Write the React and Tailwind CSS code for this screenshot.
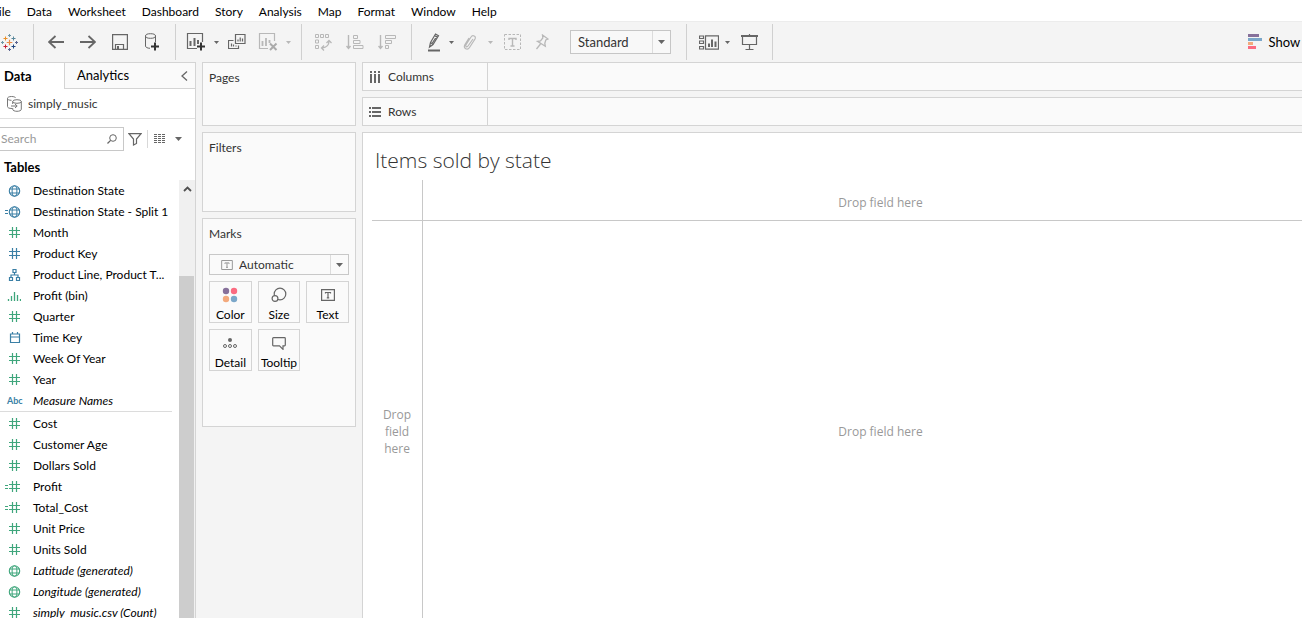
import React from "react";

const BLUE = "#3a7fa5";
const GREEN = "#3fa67c";

const Icon = ({ w = 16, h = 16, children, className = "" }) => (
  <svg width={w} height={h} viewBox={`0 0 ${w} ${h}`} fill="none" stroke="currentColor" className={`shrink-0 ${className}`} aria-hidden="true">
    {children}
  </svg>
);

const Caret = ({ className = "" }) => (
  <svg width="7" height="4" viewBox="0 0 7 4" className={`shrink-0 ${className}`} fill="currentColor" aria-hidden="true">
    <path d="M0 0h7L3.5 4z" />
  </svg>
);

const Logo = () => {
  const plus = (x, y, r, c, w = 1) => <path d={`M${x - r} ${y}h${2 * r}M${x} ${y - r}v${2 * r}`} stroke={c} strokeWidth={w} />;
  return (
    <Icon w={19} h={19}>
      {plus(9.5, 9.5, 2.8, "#eb8a44", 1.2)}
      {plus(5.5, 5.5, 2, "#eb9129", 1)}
      {plus(13.5, 5.5, 2, "#59879b", 1)}
      {plus(5.5, 13.5, 2, "#c72035", 1)}
      {plus(13.5, 13.5, 2, "#1f447e", 1)}
      {plus(9.5, 2.5, 1.5, "#7099a6")}
      {plus(9.5, 16.5, 1.5, "#5c6692")}
      {plus(2.5, 9.5, 1.5, "#7099a6")}
      {plus(16.5, 9.5, 1.5, "#5c6692")}
    </Icon>
  );
};

const Back = () => <Icon w={16} h={14}><path d="M16 7H1M7.5 1L1 7l6.500 6" strokeWidth="1.8" /></Icon>;
const Forward = () => <Icon w={16} h={14}><path d="M0 7h15M8.500 1L15 7l-6.500 6" strokeWidth="1.8" /></Icon>;
const Save = () => (
  <Icon w={16} h={16}>
    <path d="M.6.6h14.800v14.800H.6zM3.500 15v-4.500h8V15" strokeWidth="1.2" />
    <path d="M5 12h2v3H5z" fill="currentColor" stroke="none" />
  </Icon>
);
const NewSource = () => (
  <Icon w={16} h={18}>
    <ellipse cx="6.500" cy="3" rx="5" ry="2.300" />
    <path d="M1.500 3v10c0 1.300 1.800 2.200 4.500 2.300M11.500 3v6" />
    <path d="M7 13.500h8M11 9.500v8" stroke="#333" strokeWidth="2" />
  </Icon>
);
const NewSheet = () => (
  <Icon w={20} h={18}>
    <path d="M11 15.500H1.500v-15h15V9" strokeWidth="1.200" />
    <path d="M4.500 8v5M8.500 5v8M12 7v4" strokeWidth="2" />
    <path d="M11 13.500h8M15 9.500v8" stroke="#333" strokeWidth="2" />
  </Icon>
);
const Duplicate = () => (
  <Icon w={18} h={16}>
    <path d="M7.500.5h9.500v9h-9.500zM5.500 6.500h-5v8h10v-3M3.500 12.500v-3M5.500 12.500v-2M8 12.500v-1M10 7.500v-2M12.200 7.500v-4M14.500 7.500v-3" strokeWidth="1.200" />
  </Icon>
);
const ClearSheet = () => (
  <Icon w={20} h={18}>
    <path d="M10 15.500H1.500v-15h15V8" strokeWidth="1.200" />
    <path d="M4.500 8v5M8 5v8M11.500 7v3" strokeWidth="1.800" />
    <path d="M12 10.500l6.500 6.500M18.500 10.500L12 17" stroke="#aaa" strokeWidth="2" />
  </Icon>
);
const Swap = () => (
  <Icon w={18} h={18}>
    <path d="M1.500 1.500h3v3h-3zM6.500 1.500h3v3h-3zM11.500 1.500h3v3h-3zM1.500 7h3v3h-3zM1.500 12.500h3v3h-3z" />
    <path d="M15 8c0 4-2.500 6.500-7 7M12.500 10l2.500-2.500 2.500 2.500M10 12.500l-2.500 2.500L10 17.500" strokeWidth="1.300" />
  </Icon>
);
const SortAsc = () => (
  <Icon w={18} h={16}>
    <path d="M2.500 1v13M.5 12l2 2.500 2-2.500" strokeWidth="1.400" />
    <path d="M7.500 1.500h4v3h-4zM7.500 6.500h6.500v3H7.500zM7.500 11.500h9.500v3H7.500z" />
  </Icon>
);
const SortDesc = () => (
  <Icon w={18} h={16}>
    <path d="M2.500 1v13M.5 12l2 2.500 2-2.500" strokeWidth="1.400" />
    <path d="M7.500 1.500h10v3h-10zM7.500 6.500h6v3h-6zM7.500 11.500h3v3h-3z" />
  </Icon>
);
const Highlighter = () => (
  <Icon w={14} h={19}>
    <path d="M3.500 9.500L8.500 1l3 1.800-5.500 8.700-3.500 2.500zM3.500 9.500l2.800 2M7.500 2.500l3 2M5 10.500l5-7.500" strokeWidth="1.200" />
    <path d="M1 17.500h12" strokeWidth="2" />
  </Icon>
);
const Clip = () => (
  <Icon w={14} h={17}>
    <path d="M10 5l-5 7c-1 1.500-3 .5-2-1.200L8 3c1.500-2.500 5.500-1 4 2l-5.500 8.500c-2 3-6.500 1-4.800-2.500L6 4" strokeWidth="1.200" />
  </Icon>
);
const TextLabel = () => (
  <Icon w={17} h={16}>
    <path d="M.5.5h16v15H.5z" strokeDasharray="2.500 1.500" />
    <path d="M5 6V4.500h7V6M8.500 4.500V12M6.500 12h4" strokeWidth="1.400" />
  </Icon>
);
const Pin = () => (
  <Icon w={14} h={16}>
    <path d="M7.500 1l5.500 4-2.200 1-1 3.200.5 3L2.500 7.300l3-.5L7.800 4zM5.500 10L1.500 15" strokeWidth="1.300" />
  </Icon>
);
const Cards = () => (
  <Icon w={20} h={15}>
    <path d="M.5 1h4v2.500h-4zM.5 6h4v2.500h-4zM.5 11.500h4V14h-4zM6.500.8h13v13.400h-13z" strokeWidth="1.200" />
    <path d="M10 8.500V12M13 4.500V12M16.500 6.500V12" strokeWidth="2" />
  </Icon>
);
const Present = () => (
  <Icon w={17} h={17}>
    <path d="M0 2h17" strokeWidth="2" />
    <path d="M1.500 3v7.500h14V3M8.500 0v1M8.500 10.500v5M4.500 15.500h8" strokeWidth="1.200" />
  </Icon>
);
const ShowMeIcon = () => (
  <svg width="15" height="16" viewBox="0 0 15 16" className="shrink-0" aria-hidden="true">
    <path d="M0 0h11v3H0z" fill="#86709a" />
    <path d="M0 4h14v3H0z" fill="#7ba7c9" />
    <path d="M0 8h5v3H0z" fill="#f3a97c" />
    <path d="M0 12h8v3H0z" fill="#fb6b80" />
  </svg>
);

const Section = ({ children, className = "" }) => (
  <div className={`flex h-9 shrink-0 items-center border-r border-[#d0d0d0] ${className}`}>{children}</div>
);
const Tool = ({ label, children, className = "w-8", off }) => (
  <button type="button" aria-label={label} className={`flex h-7 shrink-0 items-center justify-center ${off ? "text-[#b8b8b8]" : "text-[#666]"} ${className}`}>
    {children}
  </button>
);

const Hash = ({ calc }) => (
  <Icon w={16} h={12}>
    {calc && <path d="M0 4.500h3M0 7.500h3" />}
    <path d="M4 3.500h11M4 7.500h11M7.500 0v11M11.500 0v11" strokeWidth="1.200" />
  </Icon>
);
const Globe = ({ calc }) => (
  <Icon w={16} h={12}>
    {calc && <path d="M0 4.500h3M0 7.500h3" />}
    <circle cx="9.500" cy="6" r="5.200" strokeWidth="1.100" />
    <ellipse cx="9.500" cy="6" rx="2.400" ry="5.200" />
    <path d="M4.500 4h10M4.500 8h10" />
  </Icon>
);
const Hierarchy = () => (
  <Icon w={16} h={12}>
    <path d="M8 .5h3v3H8zM4.500 8.500h3v3h-3zM11.500 8.500h3v3h-3zM9.500 3.500v2.500M6 8.500V6h7v2.500" strokeWidth="1.200" />
  </Icon>
);
const Bin = () => (
  <Icon w={16} h={12}>
    <path d="M3.500 9v2M6.500 6v5M9.500 2v9M12.500 5v6M15.500 9v2" strokeWidth="1.300" />
  </Icon>
);
const Calendar = () => (
  <Icon w={16} h={12}>
    <path d="M5.500 2h9v8.500h-9zM5.500 5h9M7.500 0v2.500M12.500 0v2.500" strokeWidth="1.200" />
  </Icon>
);
const Abc = () => <span className="pl-0.5 text-[9px] leading-3 font-bold">Abc</span>;

const dimensions = [
  ["Destination State", <Globe />, BLUE],
  ["Destination State - Split 1", <Globe calc />, BLUE],
  ["Month", <Hash />, GREEN],
  ["Product Key", <Hash />, BLUE],
  ["Product Line, Product T...", <Hierarchy />, BLUE],
  ["Profit (bin)", <Bin />, GREEN],
  ["Quarter", <Hash />, GREEN],
  ["Time Key", <Calendar />, BLUE],
  ["Week Of Year", <Hash />, GREEN],
  ["Year", <Hash />, GREEN],
  ["Measure Names", <Abc />, BLUE, true],
];
const measures = [
  ["Cost", <Hash />, GREEN],
  ["Customer Age", <Hash />, GREEN],
  ["Dollars Sold", <Hash />, GREEN],
  ["Profit", <Hash calc />, GREEN],
  ["Total_Cost", <Hash calc />, GREEN],
  ["Unit Price", <Hash />, GREEN],
  ["Units Sold", <Hash />, GREEN],
  ["Latitude (generated)", <Globe />, GREEN, true],
  ["Longitude (generated)", <Globe />, GREEN, true],
  ["simply_music.csv (Count)", <Hash />, GREEN, true],
];

const FieldList = ({ fields }) => (
  <ul>
    {fields.map(([name, icon, color, italic]) => (
      <li key={name}>
        <button type="button" className="flex h-[21px] w-full items-center pl-[5px] text-left whitespace-nowrap">
          <span className="flex w-7 shrink-0" style={{ color }}>{icon}</span>
          <span className={italic ? "italic" : ""}>{name}</span>
        </button>
      </li>
    ))}
  </ul>
);

const Card = ({ title, className, children }) => (
  <section className={`shrink-0 border border-[#d4d4d4] bg-[#fafafa] px-1.5 ${className}`}>
    <h2 className="mt-[7px] leading-4 text-[#333]">{title}</h2>
    {children}
  </section>
);

const MarkButton = ({ label, children }) => (
  <button type="button" className="flex h-[42px] flex-col items-center justify-between border border-[#d4d4d4] pt-[3px] text-[#666]">
    <span className="flex h-5 items-center">{children}</span>
    <span className="leading-[14px] whitespace-nowrap text-black">{label}</span>
  </button>
);

const TextMark = ({ className }) => (
  <Icon w={14} h={12} className={className}>
    <path d="M.6.6h12.800v10.800H.6z" strokeWidth="1.200" />
    <path d="M4.500 4.500V3.500h5v1M7 3.500v5M5.800 8.800h2.400" strokeWidth="1.200" />
  </Icon>
);

const Shelf = ({ label, icon }) => (
  <section className="flex h-[29px] shrink-0 border-y border-l border-[#d4d4d4] bg-[#fafafa]">
    <h2 className="flex w-[125px] items-center gap-[7px] border-r border-[#d4d4d4] pl-1.5 text-[#333]">
      {icon}
      {label}
    </h2>
  </section>
);

export default function App() {
  return (
    <div className="flex h-screen flex-col overflow-hidden bg-[#f4f4f4] font-['Lato','Noto_Sans',sans-serif] text-xs text-black">
      <nav className="flex h-[22px] shrink-0 items-center gap-4 border-b border-[#ececec] bg-white pt-0.5">
        {["File", "Data", "Worksheet", "Dashboard", "Story", "Analysis", "Map", "Format", "Window", "Help"].map((m) => (
          <a key={m} href="#" className="first:-ml-2">{m}</a>
        ))}
      </nav>

      <header className="flex h-10 shrink-0 items-center">
        <Section className="w-[34px]"><Logo /></Section>
        <Section className="pr-[7px] pl-1.5">
          <Tool label="Undo"><Back /></Tool>
          <Tool label="Redo"><Forward /></Tool>
          <Tool label="Save"><Save /></Tool>
          <Tool label="New data source"><NewSource /></Tool>
        </Section>
        <Section className="pr-[5px] pl-2">
          <Tool label="New worksheet" className="w-6"><NewSheet /></Tool>
          <Tool label="New worksheet options" className="w-4"><Caret className="h-[3px] w-[5px]" /></Tool>
          <Tool label="Duplicate" className="w-[26px]"><Duplicate /></Tool>
          <Tool label="Clear sheet" className="ml-1.5 w-6" off><ClearSheet /></Tool>
          <Tool label="Clear options" className="w-4" off><Caret className="h-[3px] w-[5px]" /></Tool>
        </Section>
        <Section className="pr-2 pl-[5px]">
          <Tool label="Swap rows and columns" off><Swap /></Tool>
          <Tool label="Sort ascending" off><SortAsc /></Tool>
          <Tool label="Sort descending" off><SortDesc /></Tool>
        </Section>
        <Section className="pr-[15px] pl-2.5">
          <Tool label="Highlight" className="w-6"><Highlighter /></Tool>
          <Tool label="Highlight options" className="w-2.5"><Caret className="h-[3px] w-[5px]" /></Tool>
          <Tool label="Group members" className="w-7" off><Clip /></Tool>
          <Tool label="Group options" className="w-3" off><Caret className="h-[3px] w-[5px]" /></Tool>
          <Tool label="Show mark labels" off><TextLabel /></Tool>
          <Tool label="Fix axes" className="w-7" off><Pin /></Tool>
          <div className="relative ml-3.5 flex h-6 w-[101px] border border-[#c6c6c6] bg-[#f8f8f8]">
            <select aria-label="Fit" className="w-full appearance-none border-0 bg-transparent pt-px pl-[7px] text-[13px] text-[#333]">
              <option>Standard</option>
            </select>
            <span className="pointer-events-none absolute inset-y-0 right-0 flex w-[18px] items-center justify-center border-l border-[#dcdcdc] text-[#666]"><Caret /></span>
          </div>
        </Section>
        <Section className="pr-[7px] pl-2.5">
          <Tool label="Show or hide cards" className="w-6"><Cards /></Tool>
          <Tool label="Card options" className="w-3"><Caret className="h-[3px] w-[5px]" /></Tool>
          <Tool label="Presentation mode"><Present /></Tool>
        </Section>
        <button type="button" className="-mr-5 ml-auto flex shrink-0 items-center gap-1.5 pt-px text-[13px]">
          <ShowMeIcon />
          Show Me
        </button>
      </header>

      <div className="flex min-h-0 flex-1 gap-1.5">
        <aside className="flex w-[196px] shrink-0 flex-col overflow-hidden border-t border-r border-[#d4d4d4] bg-white">
          <div className="flex h-[26px] shrink-0">
            <button type="button" className="w-16 pt-px pl-1 text-left text-[13px] font-bold">Data</button>
            <button type="button" className="flex flex-1 items-center justify-between border-b border-l border-[#d4d4d4] bg-[#fafafa] pt-px pr-[7px] pl-3 text-[13px]">
              Analytics
              <Icon w={7} h={10} className="text-[#666]"><path d="M6 .5L1 5l5 4.500" strokeWidth="1.300" /></Icon>
            </button>
          </div>
          <div className="flex h-[30px] shrink-0 items-center gap-1.5 border-b border-[#e0e0e0] pl-[7px] text-[#333]">
            <Icon w={15} h={16} className="text-[#777]">
              <path d="M5 12.500c-3 0-4.500-.8-4.500-2V2.500C.5 1.300 2 .5 4.500.5s4 .7 4 1.500M.5 2.500c0 1 1.500 1.800 4 1.800" />
              <ellipse cx="10" cy="5.500" rx="4.300" ry="1.800" />
              <path d="M5.700 5.500V8M14.300 5.500v7.800c0 1.200-2 2-4.300 2s-4.300-.8-4.300-2V12M4 10h6M8 8l2.200 2L8 12" />
            </Icon>
            simply_music
          </div>
          <div className="mt-2 flex h-6 shrink-0 items-center">
            <div className="-ml-1 flex h-6 w-32 shrink-0 items-center border border-[#c8c8c8] pr-1.5 pl-1">
              <input aria-label="Search fields" placeholder="Search" className="min-w-0 flex-1 bg-transparent outline-none placeholder:text-[#999]" />
              <Icon w={10} h={10} className="text-[#666]"><circle cx="6" cy="4" r="3.300" /><path d="M3.600 6.400L.5 9.500" strokeWidth="1.300" /></Icon>
            </div>
            <button type="button" aria-label="Filter fields" className="ml-1 text-[#666]">
              <Icon w={14} h={13}><path d="M1 .7h12L8.500 6v4.500L5.500 12V6z" strokeWidth="1.200" /></Icon>
            </button>
            <span className="ml-[5px] h-[18px] w-px bg-[#d8d8d8]" />
            <button type="button" aria-label="View options" className="ml-1.5 flex items-center gap-[9px] text-[#666]">
              <Icon w={12} h={10}><path d="M0 .5h12M0 2.500h12M0 4.500h12M0 6.500h12M0 8.500h12" strokeDasharray="3 1" /></Icon>
              <Caret />
            </button>
          </div>
          <h2 className="flex h-[29px] shrink-0 items-center pt-1 pl-1 text-[13px] font-bold">Tables</h2>
          <div className="flex min-h-0 flex-1">
            <div className="min-w-0 flex-1 overflow-hidden">
              <FieldList fields={dimensions} />
              <hr className="mr-[7px] mb-px border-[#dcdcdc]" />
              <FieldList fields={measures} />
            </div>
            <div className="flex w-4 shrink-0 flex-col bg-[#f0f0f0]">
              <button type="button" aria-label="Scroll up" className="flex h-[18px] items-center justify-center text-[#505050]">
                <Icon w={9} h={6}><path d="M1 5l3.500-3.500L8 5" strokeWidth="1.800" /></Icon>
              </button>
              <span className="mt-[78px] mr-px flex-1 bg-[#cdcdcd]" />
            </div>
          </div>
        </aside>

        <div className="flex w-[154px] shrink-0 flex-col gap-1.5">
          <Card title="Pages" className="h-16" />
          <Card title="Filters" className="h-20" />
          <Card title="Marks" className="h-[209px]">
            <div className="relative mt-3 flex h-[21px] items-center border border-[#c8c8c8]">
              <TextMark className="pointer-events-none absolute left-[11px] h-[10px] w-3 text-[#999]" />
              <select aria-label="Mark type" className="h-full w-full appearance-none border-0 bg-transparent pl-[29px] text-xs text-[#333]">
                <option>Automatic</option>
              </select>
              <span className="pointer-events-none absolute inset-y-0 right-0 flex w-[18px] items-center justify-center border-l border-[#dcdcdc] text-[#666]"><Caret /></span>
            </div>
            <div className="mt-1.5 grid grid-cols-3 gap-1.5">
              <MarkButton label="Color">
                <svg width="16" height="16" viewBox="0 0 16 16" aria-hidden="true">
                  <circle cx="4" cy="4" r="3.200" fill="#86709a" /><circle cx="12" cy="4" r="3.200" fill="#fb6b80" />
                  <circle cx="4" cy="12" r="3.200" fill="#f3a97c" /><circle cx="12" cy="12" r="3.200" fill="#7ba7c9" />
                </svg>
              </MarkButton>
              <MarkButton label="Size">
                <Icon w={16} h={16}>
                  <circle cx="9" cy="7" r="5.800" strokeWidth="1.200" /><circle cx="4" cy="11.500" r="2.900" strokeWidth="1.200" fill="#fafafa" />
                </Icon>
              </MarkButton>
              <MarkButton label="Text"><TextMark /></MarkButton>
              <MarkButton label="Detail">
                <Icon w={14} h={12}>
                  <circle cx="7" cy="3" r="2" fill="currentColor" stroke="none" />
                  <circle cx="2" cy="9" r="1.500" /><circle cx="7" cy="9" r="1.500" /><circle cx="12" cy="9" r="1.500" />
                </Icon>
              </MarkButton>
              <MarkButton label="Tooltip">
                <Icon w={14} h={13}><path d="M1.500.7h11q.8 0 .8.800v6.500q0 .8-.8.800H11v3.500L7.500 8.800h-6q-.8 0-.8-.8V1.500q0-.8.800-.8z" strokeWidth="1.200" /></Icon>
              </MarkButton>
            </div>
          </Card>
        </div>

        <main className="flex min-w-0 flex-1 flex-col gap-1.5">
          <Shelf
            label="Columns"
            icon={<Icon w={12} h={12} className="text-[#666]"><path d="M2 0v2M6 0v2M10 0v2M2 3v9M6 3v9M10 3v9" strokeWidth="2" /></Icon>}
          />
          <Shelf
            label="Rows"
            icon={<Icon w={12} h={12} className="text-[#666]"><path d="M0 2h2M0 6h2M0 10h2M3 2h9M3 6h9M3 10h9" strokeWidth="2" /></Icon>}
          />
          <section className="-mr-9 -mb-6 flex min-h-0 flex-1 flex-col border-t border-l border-[#d4d4d4] bg-white">
            <h1 className="flex h-[47px] shrink-0 items-center pt-1.5 pl-3 font-['Open_Sans','Noto_Sans',sans-serif] text-[21px] font-light text-[#333]">Items sold by state</h1>
            <div className="ml-[9px] grid flex-1 grid-cols-[51px_1fr] grid-rows-[41px_1fr] text-center font-['Open_Sans','Noto_Sans',sans-serif] text-xs text-[#999]">
              <div className="border-r border-b border-[#c8c8c8]" />
              <div className="flex items-center justify-center border-b border-[#c8c8c8] pt-1.5">Drop field here</div>
              <div className="flex items-center justify-center border-r border-[#c8c8c8] px-2 leading-[17px]">Drop field here</div>
              <div className="flex items-center justify-center">Drop field here</div>
            </div>
          </section>
        </main>
      </div>
    </div>
  );
}
